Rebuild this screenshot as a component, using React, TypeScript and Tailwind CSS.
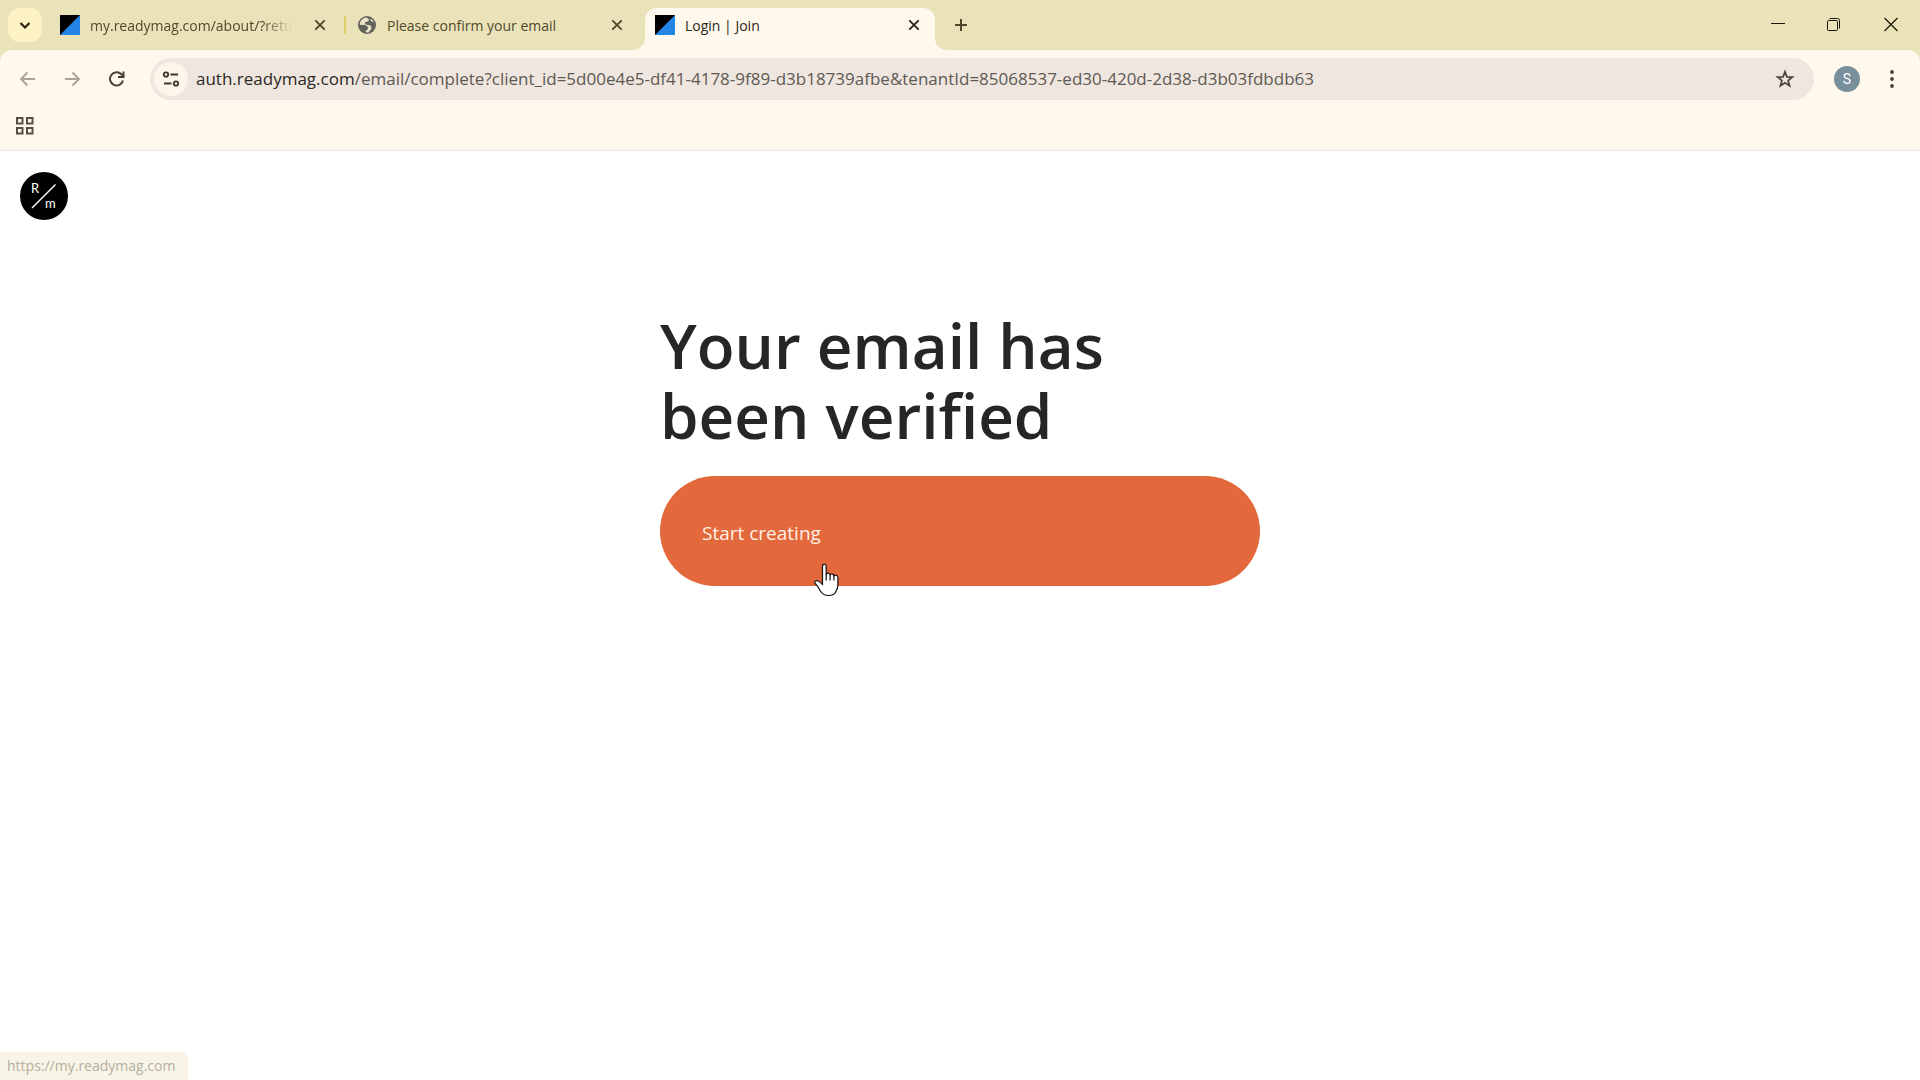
import React, { ReactNode } from "react";

type TabProps = {
  title: string;
  icon: ReactNode;
  active?: boolean;
  faded?: boolean;
};

function ReadymagFavicon() {
  return (
    <svg className="h-5 w-5 shrink-0" viewBox="0 0 20 20" aria-hidden="true">
      <rect width="20" height="20" fill="#2484e4" />
      <path d="M0 0h20L0 20z" fill="#000" />
    </svg>
  );
}

function GlobeFavicon() {
  return (
    <svg className="h-5 w-5 shrink-0" viewBox="0 0 20 20" aria-hidden="true">
      <circle cx="10" cy="10" r="9" fill="#62635a" />
      <path
        d="M9.2 2.6C5.6 3.200 3 6 2.700 9.400c1.200.500 2.500.700 3.800.500 1.500-.2 2.600.6 3.600 1.400 1 .8 1.200 1.900.6 2.900-.6.900-1.600.900-2 1.800-.1.500 0 .9.200 1.300 1 .2 2.100.1 3-.1.200-1.300 1.300-1.700 2-2.500.8-1 .7-2.300.2-3.300-.6-1.200-2-1.300-3.200-1.300-1.200 0-2.200-.6-2.900-1.500-.4-.6-.1-1.300.5-1.600.9-.4 1.900-.1 2.700-.7.800-.7.900-1.800.1-2.500-.5-.5-1.300-.8-2.100-1.200z"
        fill="#e8e3c4"
      />
      <path
        d="M13.500 3.800c-.2 1.100.2 2.300 1.200 2.800.7.400 1.400.3 2 .2-.7-1.300-1.900-2.400-3.200-3z"
        fill="#e8e3c4"
      />
    </svg>
  );
}

function CloseIcon() {
  return (
    <svg
      className="h-5 w-5"
      viewBox="0 0 20 20"
      stroke="currentColor"
      strokeWidth="1.900"
      aria-hidden="true"
    >
      <path d="M5.300 5.300l9.400 9.400M14.700 5.300l-9.400 9.400" />
    </svg>
  );
}

function Tab({ title, icon, active, faded }: TabProps) {
  return (
    <div
      className={
        active
          ? "relative flex h-[42px] w-[290px] items-center rounded-t-xl bg-[#fff8ec] pr-[11px] pb-2 pl-[10px] text-[#2b2719]"
          : "flex h-[42px] w-[288px] items-center pr-[18px] pb-2 text-[#4f4a2c]"
      }
    >
      {active && (
        <>
          <svg
            className="absolute bottom-0 -left-3 h-3 w-3"
            viewBox="0 0 12 12"
            aria-hidden="true"
          >
            <path d="M12 0v12H0A12 12 0 0 0 12 0z" fill="#fff8ec" />
          </svg>
          <svg
            className="absolute -right-3 bottom-0 h-3 w-3"
            viewBox="0 0 12 12"
            aria-hidden="true"
          >
            <path d="M0 0v12h12A12 12 0 0 1 0 0z" fill="#fff8ec" />
          </svg>
        </>
      )}
      {icon}
      <span
        className={
          faded
            ? "ml-[10px] text-[14px] whitespace-nowrap [mask-image:linear-gradient(to_right,black_85%,transparent)]"
            : "ml-[10px] text-[14px] whitespace-nowrap"
        }
      >
        {title}
      </span>
      <button type="button" className="ml-auto" aria-label={`Close ${title}`}>
        <CloseIcon />
      </button>
    </div>
  );
}

function TabStrip() {
  return (
    <div className="flex h-[50px] items-end bg-[#eae2b9]">
      <button
        type="button"
        aria-label="Search tabs"
        className="mb-2 ml-2 flex h-[34px] w-[34px] items-center justify-center rounded-xl bg-[#fdf2c4]"
      >
        <svg
          className="h-5 w-5"
          viewBox="0 0 20 20"
          fill="none"
          stroke="#2a2614"
          strokeWidth="2.200"
          aria-hidden="true"
        >
          <path d="M5.500 8l4.500 4.500L14.500 8" />
        </svg>
      </button>
      <div className="ml-[18px] flex items-end">
        <Tab
          title="my.readymag.com/about/?retu"
          icon={<ReadymagFavicon />}
          faded
        />
        <div className="mb-4 -ml-1 h-[18px] w-[2px] bg-[#dccf6e]" />
        <div className="ml-[11px]">
          <Tab title="Please confirm your email" icon={<GlobeFavicon />} />
        </div>
        <Tab title="Login | Join" icon={<ReadymagFavicon />} active />
      </div>
      <button
        type="button"
        aria-label="New tab"
        className="mb-[15px] ml-4 text-[#4f4a2c]"
      >
        <svg
          className="h-5 w-5"
          viewBox="0 0 20 20"
          stroke="currentColor"
          strokeWidth="2"
          aria-hidden="true"
        >
          <path d="M10 4v12M4 10h12" />
        </svg>
      </button>
      <WindowControls />
    </div>
  );
}

function WindowControls() {
  return (
    <div className="ml-auto flex h-[50px] text-[#1b1708]">
      <button
        type="button"
        aria-label="Minimize"
        className="flex w-14 items-center justify-center"
      >
        <svg className="h-4 w-4" viewBox="0 0 16 16" aria-hidden="true">
          <path d="M1 6.500h14" stroke="currentColor" />
        </svg>
      </button>
      <button
        type="button"
        aria-label="Restore"
        className="flex w-14 items-center justify-center"
      >
        <svg
          className="h-4 w-4"
          viewBox="0 0 16 16"
          fill="none"
          stroke="currentColor"
          aria-hidden="true"
        >
          <rect x="1.500" y="3.500" width="10" height="10" rx="1" />
          <path d="M3.500 1.500h8a2 2 0 0 1 2 2v8" />
        </svg>
      </button>
      <button
        type="button"
        aria-label="Close window"
        className="flex w-[58px] items-center justify-center"
      >
        <svg
          className="h-4 w-4"
          viewBox="0 0 16 16"
          stroke="currentColor"
          strokeWidth="1.200"
          aria-hidden="true"
        >
          <path d="M1.500 1l13 13M14.500 1l-13 13" />
        </svg>
      </button>
    </div>
  );
}

function AddressBar() {
  return (
    <div className="flex h-[42px] flex-1 items-center rounded-full bg-[#eee6df] pr-[19px] pl-1">
      <button
        type="button"
        aria-label="View site information"
        className="flex h-[34px] w-[34px] shrink-0 items-center justify-center rounded-full bg-[#fcf5ea]"
      >
        <svg
          className="h-5 w-5"
          viewBox="0 0 20 20"
          fill="none"
          stroke="#3a352b"
          strokeWidth="1.800"
          aria-hidden="true"
        >
          <circle cx="5" cy="5.500" r="2.200" />
          <path d="M9.500 5.500H17M3 14.500h7.500" />
          <circle cx="15" cy="14.500" r="2.200" />
        </svg>
      </button>
      <label
        htmlFor="address"
        className="ml-2 text-[17px] whitespace-nowrap text-[#2c2823]"
      >
        auth.readymag.com
      </label>
      <input
        id="address"
        type="text"
        spellCheck={false}
        defaultValue="/email/complete?client_id=5d00e4e5-df41-4178-9f89-d3b18739afbe&tenantId=85068537-ed30-420d-2d38-d3b03fdbdb63"
        className="min-w-0 flex-1 bg-transparent text-[17px] text-[#5f5953] outline-none"
      />
      <button type="button" aria-label="Bookmark this tab">
        <svg
          className="h-5 w-5"
          viewBox="0 0 20 20"
          fill="none"
          stroke="#4a433c"
          strokeWidth="1.700"
          aria-hidden="true"
        >
          <path d="M10 2.800l1.900 5.100 5.500.2-4.300 3.400 1.500 5.300-4.600-3.100-4.600 3.100 1.500-5.300-4.300-3.400 5.500-.2z" />
        </svg>
      </button>
    </div>
  );
}

function Toolbar() {
  return (
    <div className="bg-[#eae2b9]">
      <div className="h-[101px] rounded-t-xl border-b border-[#ece6dc] bg-[#fff8ec] pt-2">
        <div className="flex items-center pr-[18px] pl-[18px]">
          <button type="button" aria-label="Back">
            <svg
              className="h-5 w-5"
              viewBox="0 0 20 20"
              fill="none"
              stroke="#aaa498"
              strokeWidth="1.900"
              aria-hidden="true"
            >
              <path d="M17 10H3.500M9.500 3.500L3 10l6.500 6.500" />
            </svg>
          </button>
          <button type="button" aria-label="Forward" className="ml-6">
            <svg
              className="h-5 w-5"
              viewBox="0 0 20 20"
              fill="none"
              stroke="#aaa498"
              strokeWidth="1.900"
              aria-hidden="true"
            >
              <path d="M3 10h13.500M10.500 3.500L17 10l-6.500 6.500" />
            </svg>
          </button>
          <button type="button" aria-label="Reload" className="mx-6">
            <svg
              className="h-5 w-5"
              viewBox="0 0 20 20"
              fill="none"
              stroke="#47422f"
              strokeWidth="2"
              aria-hidden="true"
            >
              <path d="M17 11.500A6.600 6.600 0 1 1 15.400 5.300L17.500 7.500" />
              <path d="M17.500 2.500V8h-5.500" />
            </svg>
          </button>
          <AddressBar />
          <button
            type="button"
            aria-label="Profile"
            className="ml-5 flex h-[26px] w-[26px] items-center justify-center rounded-full bg-[#78909c] font-[Roboto,sans-serif] text-[14px] text-white"
          >
            S
          </button>
          <button type="button" aria-label="Menu" className="ml-[22px]">
            <svg
              className="h-5 w-5"
              viewBox="0 0 20 20"
              fill="#47422f"
              aria-hidden="true"
            >
              <circle cx="10" cy="3" r="1.900" />
              <circle cx="10" cy="10" r="1.900" />
              <circle cx="10" cy="17" r="1.900" />
            </svg>
          </button>
        </div>
        <button type="button" aria-label="Apps" className="mt-[17px] ml-4 block">
          <svg
            className="h-[18px] w-[18px]"
            viewBox="0 0 18 18"
            fill="none"
            stroke="#55503f"
            strokeWidth="2"
            aria-hidden="true"
          >
            <rect x="1" y="1" width="5.500" height="5.500" />
            <rect x="11" y="1" width="5.500" height="5.500" />
            <rect x="1" y="11" width="5.500" height="5.500" />
            <rect x="11" y="11" width="5.500" height="5.500" />
          </svg>
        </button>
      </div>
    </div>
  );
}

function Logo() {
  return (
    <a href="#" aria-label="Readymag" className="block w-12">
      <svg className="h-12 w-12" viewBox="0 0 48 48" aria-hidden="true">
        <circle cx="24" cy="24" r="24" fill="#000" />
        <path d="M12 36L35.500 12.500" stroke="#fff" strokeWidth="1.500" />
        <g fill="#fff" fontFamily="Lato, sans-serif" fontSize="13">
          <text x="11" y="21">
            R
          </text>
          <text x="25" y="36">
            m
          </text>
        </g>
      </svg>
    </a>
  );
}

function HandCursor() {
  return (
    <svg
      className="pointer-events-none absolute top-[87px] left-[153px] h-[34px] w-[27px]"
      viewBox="0 0 27 34"
      fill="#fff"
      stroke="#111"
      strokeWidth="1.200"
      strokeLinejoin="round"
      aria-hidden="true"
    >
      <path d="M9.500 20V3.200c0-2.600 3.700-2.600 3.700 0v8.300c.5-1.900 3.700-1.700 3.900.4.800-1.400 3.600-1.100 3.800.9 1-1.200 4-.8 4 1.600V22c0 3.300-1.200 5.300-2.500 7.500-1.300 2.100-3.700 3-7 3-3.600 0-6.200-1.500-8-4.500-1.300-2.200-2.600-5-5-7.200-1.800-1.700.3-3.800 2.700-2.800 1.700.7 3 1.700 4.400 3.600z" />
      <path d="M13.200 11v6.500M17.100 11.900v5.600M20.900 12.800v4.700" fill="none" />
    </svg>
  );
}

export default function App() {
  return (
    <div className="flex min-h-screen flex-col bg-white font-['Open_Sans','Noto_Sans',sans-serif]">
      <header>
        <TabStrip />
        <Toolbar />
      </header>
      <main className="flex flex-1 flex-col">
        <div className="px-5 pt-[21px]">
          <Logo />
        </div>
        <div className="mx-auto mt-[90px] w-full max-w-[600px]">
          <h1 className="text-[62px] leading-[70px] font-semibold whitespace-nowrap text-[#262626]">
            Your email has
            <br />
            been verified
          </h1>
          <div className="relative mt-[26px]">
            <button
              type="button"
              className="h-[110px] w-full rounded-full bg-[#e3683b] px-[42px] pt-1 text-left text-[19px] text-[#fff1e6]"
            >
              Start creating
            </button>
            <HandCursor />
          </div>
        </div>
        <div className="mt-auto w-[188px] rounded-tr-md bg-[#f8f4e6] px-[7px] py-1 text-[14px] leading-[20px] text-[#b5af9f]">
          https://my.readymag.com
        </div>
      </main>
    </div>
  );
}
